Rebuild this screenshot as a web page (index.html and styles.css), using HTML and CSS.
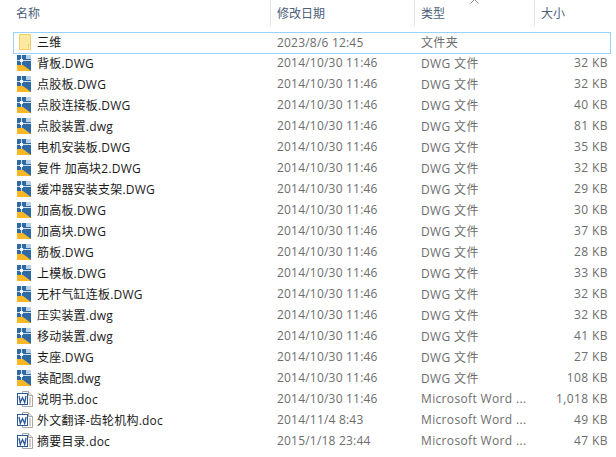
FILE: index.html
```html
<!DOCTYPE html>
<html lang="zh-CN">
<head>
<meta charset="utf-8">
<title>文件列表</title>
<link rel="stylesheet" href="styles.css">
</head>
<body>
<svg class="defs" width="0" height="0">
  <symbol id="folder" viewBox="0 0 16 16" preserveAspectRatio="xMinYMid">
    <path d="M2.5.5h11v15h-11z" fill="#ffe9a0" stroke="#efcf6a"/>
    <path d="M11.5 10.5h2v5h-2z" fill="#fff0b8" stroke="#efcf6a"/>
  </symbol>
  <symbol id="dwg" viewBox="0 0 16 16" preserveAspectRatio="xMinYMid">
    <path d="M0 0h14v16H0z" fill="#2f6aa5"/>
    <path d="M9 0h5v4H9z" fill="#b9cfe6"/>
    <path d="M0 10h6l8 6H0z" fill="#f9b625"/>
    <path d="M0 5.500h14M4.500 0v10" stroke="#cfe0f0" fill="none"/>
    <rect x="3" y="4" width="3" height="3" fill="#fff"/>
  </symbol>
  <symbol id="word" viewBox="0 0 17 16">
    <path d="M5.500.5h6l4 4v11h-10z" fill="#fff" stroke="#a8a8a8"/>
    <path d="M11.500.5v4h4" fill="#e8e8e8" stroke="#a8a8a8"/>
    <path d="M12 7h2M12 9h2M12 11h2M12 13h2" stroke="#9a9a9a"/>
    <rect x="0" y="2" width="11" height="12" fill="#2b5797"/>
    <rect x="1" y="3" width="9" height="10" fill="#fff"/>
    <path d="M2 5l1.300 6.500 2.200-5 2.200 5L9 5" fill="none" stroke="#2b5797" stroke-width="1.300"/>
  </symbol>
</svg>
<main class="list">
  <header class="head">
    <div class="hcell hname">名称</div>
    <div class="hcell">修改日期</div>
    <div class="hcell htype">类型<svg class="arrow" width="9" height="5" viewBox="0 0 9 5"><path d="M.5 4.500l4-4 4 4" fill="none" stroke="#8a8f96"/></svg></div>
    <div class="hcell">大小</div>
  </header>
  <div class="rows">
    <div class="row selected"><svg class="ico"><use href="#folder"/></svg><span class="name">三维</span><span class="date">2023/8/6 12:45</span><span class="type">文件夹</span><span class="size"></span></div>
    <div class="row"><svg class="ico"><use href="#dwg"/></svg><span class="name">背板.DWG</span><span class="date">2014/10/30 11:46</span><span class="type">DWG 文件</span><span class="size">32 KB</span></div>
    <div class="row"><svg class="ico"><use href="#dwg"/></svg><span class="name">点胶板.DWG</span><span class="date">2014/10/30 11:46</span><span class="type">DWG 文件</span><span class="size">32 KB</span></div>
    <div class="row"><svg class="ico"><use href="#dwg"/></svg><span class="name">点胶连接板.DWG</span><span class="date">2014/10/30 11:46</span><span class="type">DWG 文件</span><span class="size">40 KB</span></div>
    <div class="row"><svg class="ico"><use href="#dwg"/></svg><span class="name">点胶装置.dwg</span><span class="date">2014/10/30 11:46</span><span class="type">DWG 文件</span><span class="size">81 KB</span></div>
    <div class="row"><svg class="ico"><use href="#dwg"/></svg><span class="name">电机安装板.DWG</span><span class="date">2014/10/30 11:46</span><span class="type">DWG 文件</span><span class="size">35 KB</span></div>
    <div class="row"><svg class="ico"><use href="#dwg"/></svg><span class="name">复件 加高块2.DWG</span><span class="date">2014/10/30 11:46</span><span class="type">DWG 文件</span><span class="size">32 KB</span></div>
    <div class="row"><svg class="ico"><use href="#dwg"/></svg><span class="name">缓冲器安装支架.DWG</span><span class="date">2014/10/30 11:46</span><span class="type">DWG 文件</span><span class="size">29 KB</span></div>
    <div class="row"><svg class="ico"><use href="#dwg"/></svg><span class="name">加高板.DWG</span><span class="date">2014/10/30 11:46</span><span class="type">DWG 文件</span><span class="size">30 KB</span></div>
    <div class="row"><svg class="ico"><use href="#dwg"/></svg><span class="name">加高块.DWG</span><span class="date">2014/10/30 11:46</span><span class="type">DWG 文件</span><span class="size">37 KB</span></div>
    <div class="row"><svg class="ico"><use href="#dwg"/></svg><span class="name">筋板.DWG</span><span class="date">2014/10/30 11:46</span><span class="type">DWG 文件</span><span class="size">28 KB</span></div>
    <div class="row"><svg class="ico"><use href="#dwg"/></svg><span class="name">上模板.DWG</span><span class="date">2014/10/30 11:46</span><span class="type">DWG 文件</span><span class="size">33 KB</span></div>
    <div class="row"><svg class="ico"><use href="#dwg"/></svg><span class="name">无杆气缸连板.DWG</span><span class="date">2014/10/30 11:46</span><span class="type">DWG 文件</span><span class="size">32 KB</span></div>
    <div class="row"><svg class="ico"><use href="#dwg"/></svg><span class="name">压实装置.dwg</span><span class="date">2014/10/30 11:46</span><span class="type">DWG 文件</span><span class="size">32 KB</span></div>
    <div class="row"><svg class="ico"><use href="#dwg"/></svg><span class="name">移动装置.dwg</span><span class="date">2014/10/30 11:46</span><span class="type">DWG 文件</span><span class="size">41 KB</span></div>
    <div class="row"><svg class="ico"><use href="#dwg"/></svg><span class="name">支座.DWG</span><span class="date">2014/10/30 11:46</span><span class="type">DWG 文件</span><span class="size">27 KB</span></div>
    <div class="row"><svg class="ico"><use href="#dwg"/></svg><span class="name">装配图.dwg</span><span class="date">2014/10/30 11:46</span><span class="type">DWG 文件</span><span class="size">108 KB</span></div>
    <div class="row"><svg class="ico"><use href="#word"/></svg><span class="name">说明书.doc</span><span class="date">2014/10/30 11:46</span><span class="type">Microsoft Word ...</span><span class="size">1,018 KB</span></div>
    <div class="row"><svg class="ico"><use href="#word"/></svg><span class="name">外文翻译-齿轮机构.doc</span><span class="date">2014/11/4 8:43</span><span class="type">Microsoft Word ...</span><span class="size">49 KB</span></div>
    <div class="row"><svg class="ico"><use href="#word"/></svg><span class="name">摘要目录.doc</span><span class="date">2015/1/18 23:44</span><span class="type">Microsoft Word ...</span><span class="size">47 KB</span></div>
  </div>
</main>
</body>
</html>
```

FILE: styles.css
```css
html, body {
  margin: 0;
  padding: 0;
  background: #fff;
}
body {
  width: 616px;
  height: 457px;
  overflow: hidden;
  font-family: "Open Sans", "Noto Sans CJK SC", sans-serif;
  font-size: 12px;
}
.defs {
  position: absolute;
}
.head {
  display: grid;
  grid-template-columns: 270px 144px 120px 82px;
  height: 26px;
  color: #4c607a;
}
.hcell {
  position: relative;
  padding: 4px 0 0 6px;
  line-height: 20px;
  border-left: 1px solid #e5e5e5;
  box-sizing: border-box;
}
.hname {
  border-left: 0;
  padding-left: 16px;
}
.arrow {
  position: absolute;
  left: 55px;
  top: -1px;
}
.rows {
  display: flex;
  flex-direction: column;
  padding: 6px 5px 0 13px;
}
.row {
  display: grid;
  grid-template-columns: 24px 240px 144px 110px 80px;
  align-items: center;
  height: 21px;
  box-sizing: border-box;
  color: #6d6d6d;
  white-space: nowrap;
  letter-spacing: 0.2px;
}
.row span {
  padding-bottom: 2px;
}
.selected {
  border: 1px solid #99d1ff;
  height: 22px;
  margin-bottom: -1px;
  grid-template-columns: 23px 240px 144px 110px 79px;
}
.ico {
  align-self: start;
  width: 17px;
  height: 16px;
  margin: 2px 0 0 4px;
}
.selected .ico {
  margin: 1px 0 0 3px;
}
.name {
  color: #1a1a1a;
}
.type {
  letter-spacing: 0.35px;
}
.size {
  text-align: right;
  padding-right: 3px;
  letter-spacing: 0.4px;
}
```
